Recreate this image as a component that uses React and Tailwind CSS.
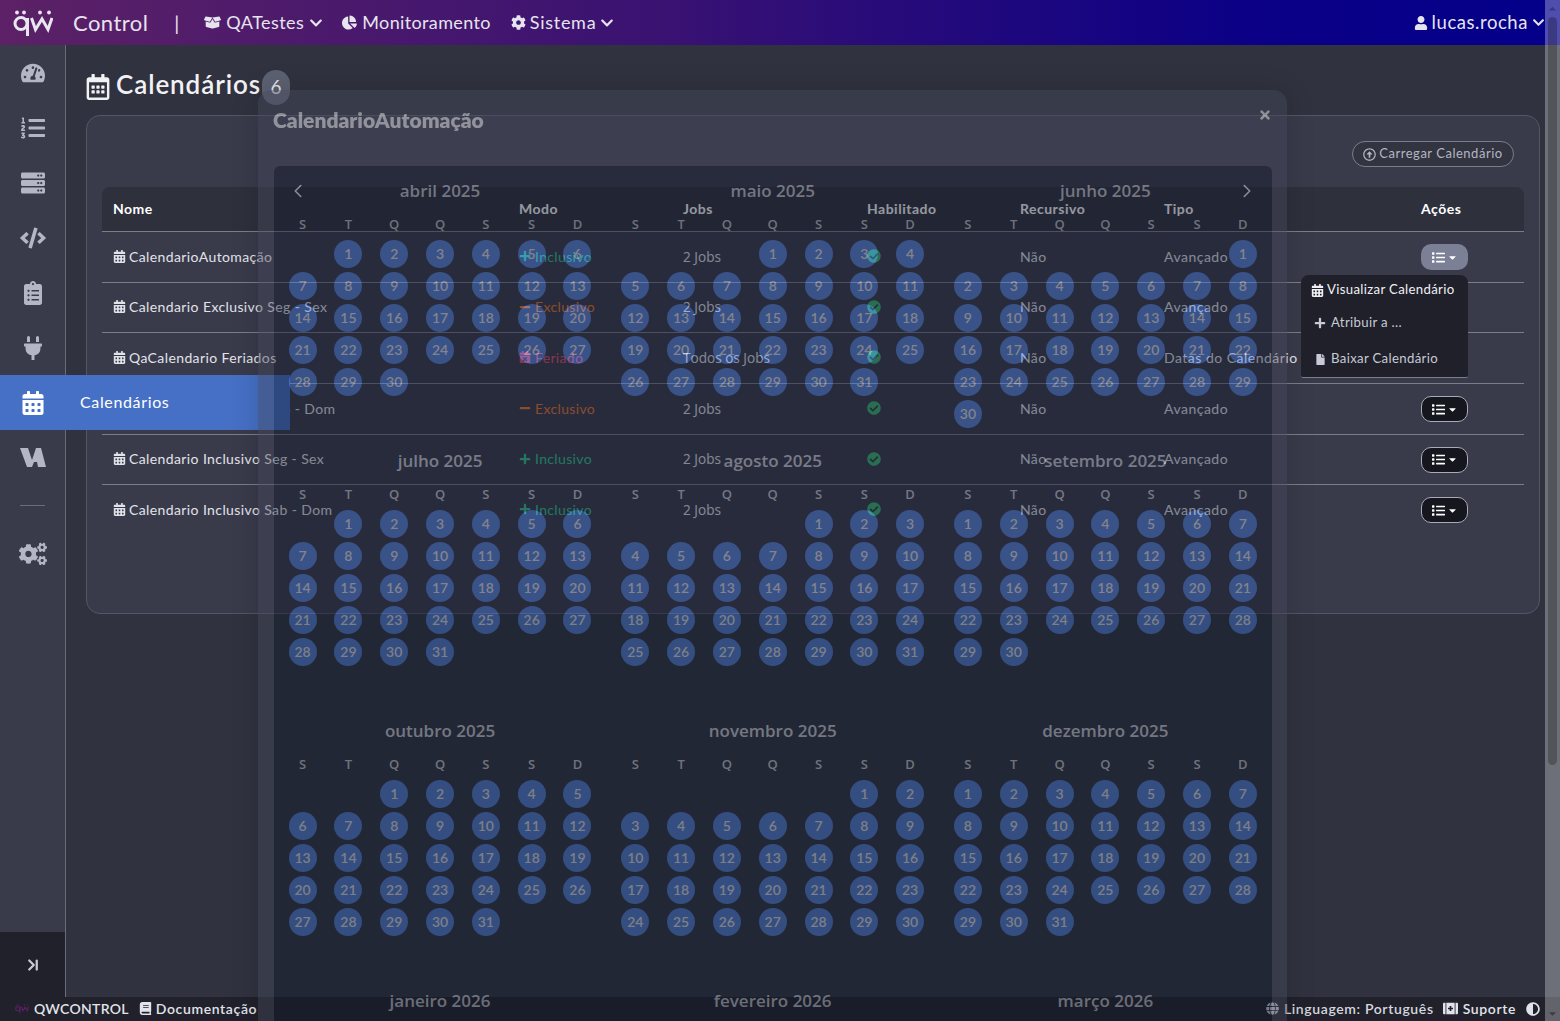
import {
  FaTachometerAlt, FaListOl, FaServer, FaCode, FaClipboardList, FaPlug, FaCalendarAlt, FaCogs,
  FaBoxOpen, FaChartPie, FaCog, FaChevronDown, FaUser, FaBook, FaGlobe, FaFirstAid, FaAdjust,
  FaRegCalendarAlt, FaPlus, FaMinus, FaCalendarTimes, FaCheckCircle, FaList, FaCaretDown,
  FaRegArrowAltCircleUp, FaFile, FaTimes, FaCaretUp,
} from 'react-icons/fa';
import { ChevronLast, ChevronLeft, ChevronRight } from 'lucide-react';

const mulish = "font-['Lato','Noto_Sans',sans-serif]";
const openSans = "font-['Open_Sans','Noto_Sans',sans-serif]";

const months = [
  ['abril 2025', 1, 30], ['maio 2025', 3, 31], ['junho 2025', 6, 30],
  ['julho 2025', 1, 31], ['agosto 2025', 4, 31], ['setembro 2025', 0, 30],
  ['outubro 2025', 2, 31], ['novembro 2025', 5, 30], ['dezembro 2025', 0, 31],
  ['janeiro 2026', 3, 31], ['fevereiro 2026', 6, 28], ['março 2026', 6, 31],
];

const rows = [
  { name: 'CalendarioAutomação', mode: 'inc', jobs: '2 Jobs', tipo: 'Avançado', h: 'h-[51px]' },
  { name: 'Calendario Exclusivo Seg - Sex', mode: 'exc', jobs: '2 Jobs', tipo: 'Avançado', h: 'h-[50px]' },
  { name: 'QaCalendario Feriados', mode: 'fer', jobs: 'Todos os Jobs', tipo: 'Datas do Calendário', h: 'h-[51px]' },
  { name: 'Calendario Exclusivo Sab - Dom', mode: 'exc', jobs: '2 Jobs', tipo: 'Avançado', h: 'h-[51px]' },
  { name: 'Calendario Inclusivo Seg - Sex', mode: 'inc', jobs: '2 Jobs', tipo: 'Avançado', h: 'h-[50px]' },
  { name: 'Calendario Inclusivo Sab - Dom', mode: 'inc', jobs: '2 Jobs', tipo: 'Avançado', h: 'h-[50px]' },
];

const gridCols = 'grid grid-cols-[406px_164px_184px_153px_144px_257px_114px]';

function Logo({ className, color = '#e8e6ef' }) {
  return (
    <svg viewBox="0 0 40 26" className={className} fill="none" stroke={color}>
      <circle cx="8" cy="13.5" r="6" strokeWidth="3" />
      <path d="M14.5 8v18" strokeWidth="3" />
      <path d="M18.5 8l4 11.5L29 9l6 10.5L39 8" strokeWidth="3" />
      <g fill={color} stroke="none">
        <circle cx="4" cy="2.5" r="1.9" />
        <circle cx="11" cy="2.5" r="1.9" />
        <circle cx="27" cy="2.5" r="1.9" />
        <circle cx="36" cy="2.5" r="1.9" />
      </g>
    </svg>
  );
}

function Navbar() {
  return (
    <div className={`h-[45px] shrink-0 flex items-center text-[#e6e4ee] bg-[linear-gradient(90deg,#5c2166_0%,#3a1272_42%,#0b0086_80%,#04008a_100%)] ${mulish}`}>
      <Logo className="ml-[13px] w-[40px] h-[26px]" />
      <span className="ml-[20px] text-[22px] tracking-[0.02em]">Control</span>
      <span className="ml-[26px] text-[20px]">|</span>
      <FaBoxOpen className="ml-[25px] text-[17px]" />
      <span className="ml-[5px] text-[18px] tracking-[0.025em]">QATestes</span>
      <FaChevronDown className="ml-[5px] text-[14px]" />
      <FaChartPie className="ml-[19px] text-[15px]" />
      <span className="ml-[5px] text-[18px] tracking-[0.02em]">Monitoramento</span>
      <FaCog className="ml-[20px] text-[15px]" />
      <span className="ml-[4px] text-[18px] tracking-[0.04em]">Sistema</span>
      <FaChevronDown className="ml-[4px] text-[14px]" />
      <div className="ml-auto mr-[15px] flex items-center">
        <FaUser className="text-[14px]" />
        <span className="ml-[4px] text-[18.5px] tracking-[0.03em]">lucas.rocha</span>
        <FaChevronDown className="ml-[4px] text-[13px]" />
      </div>
    </div>
  );
}

function SideIcon({ children }) {
  return <div className="h-[55px] flex items-center justify-center text-[24px] text-[#b4b6c6]">{children}</div>;
}

function Sidebar() {
  return (
    <div className="w-[66px] shrink-0 flex flex-col bg-[#393b4b] border-r border-[#6a6c7c]">
      <SideIcon><FaTachometerAlt /></SideIcon>
      <SideIcon><FaListOl /></SideIcon>
      <SideIcon><FaServer /></SideIcon>
      <SideIcon><FaCode className="text-[26px]" /></SideIcon>
      <SideIcon><FaClipboardList /></SideIcon>
      <SideIcon><FaPlug /></SideIcon>
      <div className="relative h-[55px]">
        <div className="absolute left-0 top-0 w-[290px] h-[55px] z-10 flex items-center bg-[#4670c6] text-white">
          <div className="w-[66px] flex justify-center text-[24px]"><FaCalendarAlt /></div>
          <span className={`ml-[14px] pb-[1px] text-[16px] tracking-[0.04em] ${mulish}`}>Calendários</span>
        </div>
      </div>
      <SideIcon>
        <svg viewBox="0 0 26 19" className="w-[26px] h-[19px]" fill="currentColor">
          <path d="M0 0h8l4 12 4-12h5l5 19h-8l-1-5h-3l-2 5H7z" />
        </svg>
      </SideIcon>
      <div className="h-[41px] flex items-center justify-center">
        <div className="w-[25px] h-px bg-[#6a6c7c]" />
      </div>
      <SideIcon><FaCogs className="text-[28px]" /></SideIcon>
      <div className="mt-auto h-[65px] flex items-center justify-center bg-[#20212b] text-[#c8cad6]">
        <ChevronLast size={18} strokeWidth={3} />
      </div>
    </div>
  );
}

function ModeCell({ mode }) {
  if (mode === 'inc') {
    return <span className="flex items-center gap-[4px] text-[#33c48d]"><FaPlus className="text-[12px]" />Inclusivo</span>;
  }
  if (mode === 'exc') {
    return <span className="flex items-center gap-[4px] text-[#e8772e]"><FaMinus className="text-[12px]" />Exclusivo</span>;
  }
  return <span className="flex items-center gap-[4px] text-[#e0506e]"><FaCalendarTimes className="text-[12px]" />Feriado</span>;
}

function CalendarTable() {
  return (
    <div className={`text-[14px] ${mulish}`}>
      <div className={`${gridCols} h-[45px] pb-[2px] items-center rounded-t-[8px] bg-[#2e303c] border-b border-[#7b7d8c] text-white font-bold tracking-[0.035em]`}>
        {['Nome', 'Modo', 'Jobs', 'Habilitado', 'Recursivo', 'Tipo', 'Ações'].map((h) => (
          <div key={h} className="pl-[11px]">{h}</div>
        ))}
      </div>
      {rows.map((r, i) => (
        <div
          key={r.name}
          className={`${gridCols} ${r.h} items-center text-[#e2e3ea] ${i < 5 ? 'border-b border-[#7b7d8c]' : ''}`}
        >
          <div className="pl-[11px] pb-[2px] flex items-center gap-[3px] tracking-[0.028em]">
            <FaCalendarAlt className="text-[13px]" />
            <span>{r.name}</span>
          </div>
          <div className="pl-[11px] pb-[2px] tracking-[0.025em]"><ModeCell mode={r.mode} /></div>
          <div className={`pl-[11px] text-[13.6px] ${openSans}`}>{r.jobs}</div>
          <div className="pl-[11px] pb-[2px]"><FaCheckCircle className="text-[14px] text-[#3cb371]" /></div>
          <div className="pl-[11px] pb-[2px] tracking-[0.025em]">Não</div>
          <div className="pl-[11px] pb-[2px] tracking-[0.035em] whitespace-nowrap">{r.tipo}</div>
          <div className="pl-[11px]">
            <button
              className={`w-[47px] h-[26px] rounded-[10px] flex items-center justify-center gap-[2px] text-[13px] text-white ${i === 0 ? 'bg-[#7c8096]' : 'border border-[#a8aab8] bg-[#16171e]'}`}
            >
              <FaList />
              <FaCaretDown className="text-[11px]" />
            </button>
          </div>
        </div>
      ))}
    </div>
  );
}

function RowMenu() {
  return (
    <div className={`absolute left-[1301px] top-[275px] z-30 w-[167px] h-[103px] rounded-t-[8px] rounded-b-[2px] bg-[#1f2029] border-b border-[#7b7d8c] text-[13.2px] text-[#e2e3ea] tracking-[0.025em] ${mulish}`}>
      <div className="h-[30px] pl-[10px] flex items-center gap-[3px] text-[#f0f0f4]">
        <FaCalendarAlt className="text-[13px]" />Visualizar Calendário
      </div>
      <div className="h-[36px] pl-[13px] flex items-center gap-[5px] text-[#c8cad6]">
        <FaPlus className="text-[12px]" />Atribuir a ...
      </div>
      <div className="h-[36px] pl-[14px] flex items-center gap-[5px] text-[#c8cad6]">
        <FaFile className="text-[11px]" />Baixar Calendário
      </div>
    </div>
  );
}

function Month({ title, offset, days }) {
  const cells = [...Array(offset).fill(null), ...Array.from({ length: days }, (_, i) => i + 1)];
  return (
    <div className="h-[270px] pl-[5.7px] pr-[6.3px]">
      <div className={`h-[49px] pt-[1px] flex items-center justify-center text-[17px] font-semibold text-[#c9cbd6] ${openSans}`}>{title}</div>
      <div className={`grid grid-cols-7 h-[13px] mb-[9.5px] text-[13px] font-semibold text-[#c0c2cc] ${openSans}`}>
        {['S', 'T', 'Q', 'Q', 'S', 'S', 'D'].map((d, i) => (
          <div key={i} className="flex items-center justify-center">{d}</div>
        ))}
      </div>
      <div className="grid grid-cols-7 auto-rows-[32px]">
        {cells.map((d, i) => (
          <div key={i} className="flex items-center justify-center">
            {d && (
              <div className={`w-[28px] h-[28px] rounded-full flex items-center justify-center bg-[#3c70d4] text-[14px] font-semibold text-[#dedede] ${mulish}`}>{d}</div>
            )}
          </div>
        ))}
      </div>
    </div>
  );
}

function CalendarModal() {
  return (
    <div className="absolute left-[258px] top-[90px] z-20 w-[1029px] h-[1200px] rounded-[14px] bg-[#444658] opacity-45 shadow-[0_0_30px_rgba(0,0,0,0.35)]">
      <div className="h-[76px] pl-[15px] pr-[15px] pt-[15px] flex justify-between items-start">
        <span className={`text-[21px] leading-[30px] font-extrabold text-white ${mulish}`}>CalendarioAutomação</span>
        <FaTimes className="mt-[3px] text-[14px] text-white" />
      </div>
      <div className="relative mx-[16px] w-[998px] rounded-t-[6px] bg-[#131a2b]">
        <ChevronLeft size={22} strokeWidth={1.75} className="absolute left-[13px] top-[14px] text-white" />
        <ChevronRight size={22} strokeWidth={1.75} className="absolute right-[14px] top-[14px] text-white" />
        <div className="grid grid-cols-3">
          {months.map(([title, offset, days]) => (
            <Month key={title} title={title} offset={offset} days={days} />
          ))}
        </div>
      </div>
    </div>
  );
}

function Footer() {
  return (
    <div className={`h-[24px] pb-[1px] shrink-0 flex items-center bg-[#20212b] text-[14px] font-semibold text-[#e2e3ea] tracking-[0.045em] ${mulish}`}>
      <Logo className="ml-[15px] w-[14px] h-[11px]" color="#5c2166" />
      <span className="ml-[5px] tracking-[0.02em]">QWCONTROL</span>
      <FaBook className="ml-[10px] text-[13px]" />
      <span className="ml-[4px]">Documentação</span>
      <div className="ml-auto mr-[20px] flex items-center">
        <FaGlobe className="text-[13px] text-[#c8cad6]" />
        <span className="ml-[5px] text-[#d6d7df]">Linguagem: Português</span>
        <FaFirstAid className="ml-[9px] text-[15px]" />
        <span className="ml-[5px]">Suporte</span>
        <FaAdjust className="ml-[10px] text-[14px]" />
      </div>
    </div>
  );
}

function FakeScrollbar() {
  return (
    <div className="absolute right-0 top-0 bottom-0 z-40 w-[15px] bg-white/30">
      <FaCaretUp className="absolute left-[2px] top-[3px] text-[11px] text-[#2a2a60]/60" />
      <div className="absolute left-[3px] right-[3px] top-[17px] h-[748px] rounded-full bg-black/25" />
      <FaCaretDown className="absolute left-[2px] bottom-[2px] text-[11px] text-black/40" />
    </div>
  );
}

export default function App() {
  return (
    <div className="relative h-screen overflow-hidden flex flex-col bg-[#30333f]">
      <Navbar />
      <div className="flex-1 flex min-h-0">
        <Sidebar />
        <div className="flex-1 min-w-0 pl-[20px] pr-[20px] pt-[25px]">
          <div className={`h-[35px] flex items-center text-[#f2f2f5] ${mulish}`}>
            <FaRegCalendarAlt className="-ml-[1px] mb-[1px] text-[26px]" />
            <span className="ml-[5px] pb-[6px] text-[26px] font-semibold tracking-[0.035em]">Calendários</span>
            <span className="ml-px w-[28px] h-[35px] rounded-[14px] bg-[#5c6172] flex items-center justify-center text-[19px] text-[#e6e6ea]">6</span>
          </div>
          <div className="mt-[10px] h-[499px] rounded-[14px] border border-[#545666] bg-[#393b4b] px-[15px] pt-[25px]">
            <div className="h-[26px] mb-[20px] flex justify-end pr-[10px]">
              <button className={`w-[162px] h-[26px] rounded-full border border-[#7b7d8c] flex items-center justify-center gap-[3px] text-[13px] text-[#b4b6c6] bg-[#32343f] tracking-[0.04em] ${mulish}`}>
                <FaRegArrowAltCircleUp className="text-[13px]" />Carregar Calendário
              </button>
            </div>
            <CalendarTable />
          </div>
        </div>
      </div>
      <Footer />
      <CalendarModal />
      <RowMenu />
      <FakeScrollbar />
    </div>
  );
}
